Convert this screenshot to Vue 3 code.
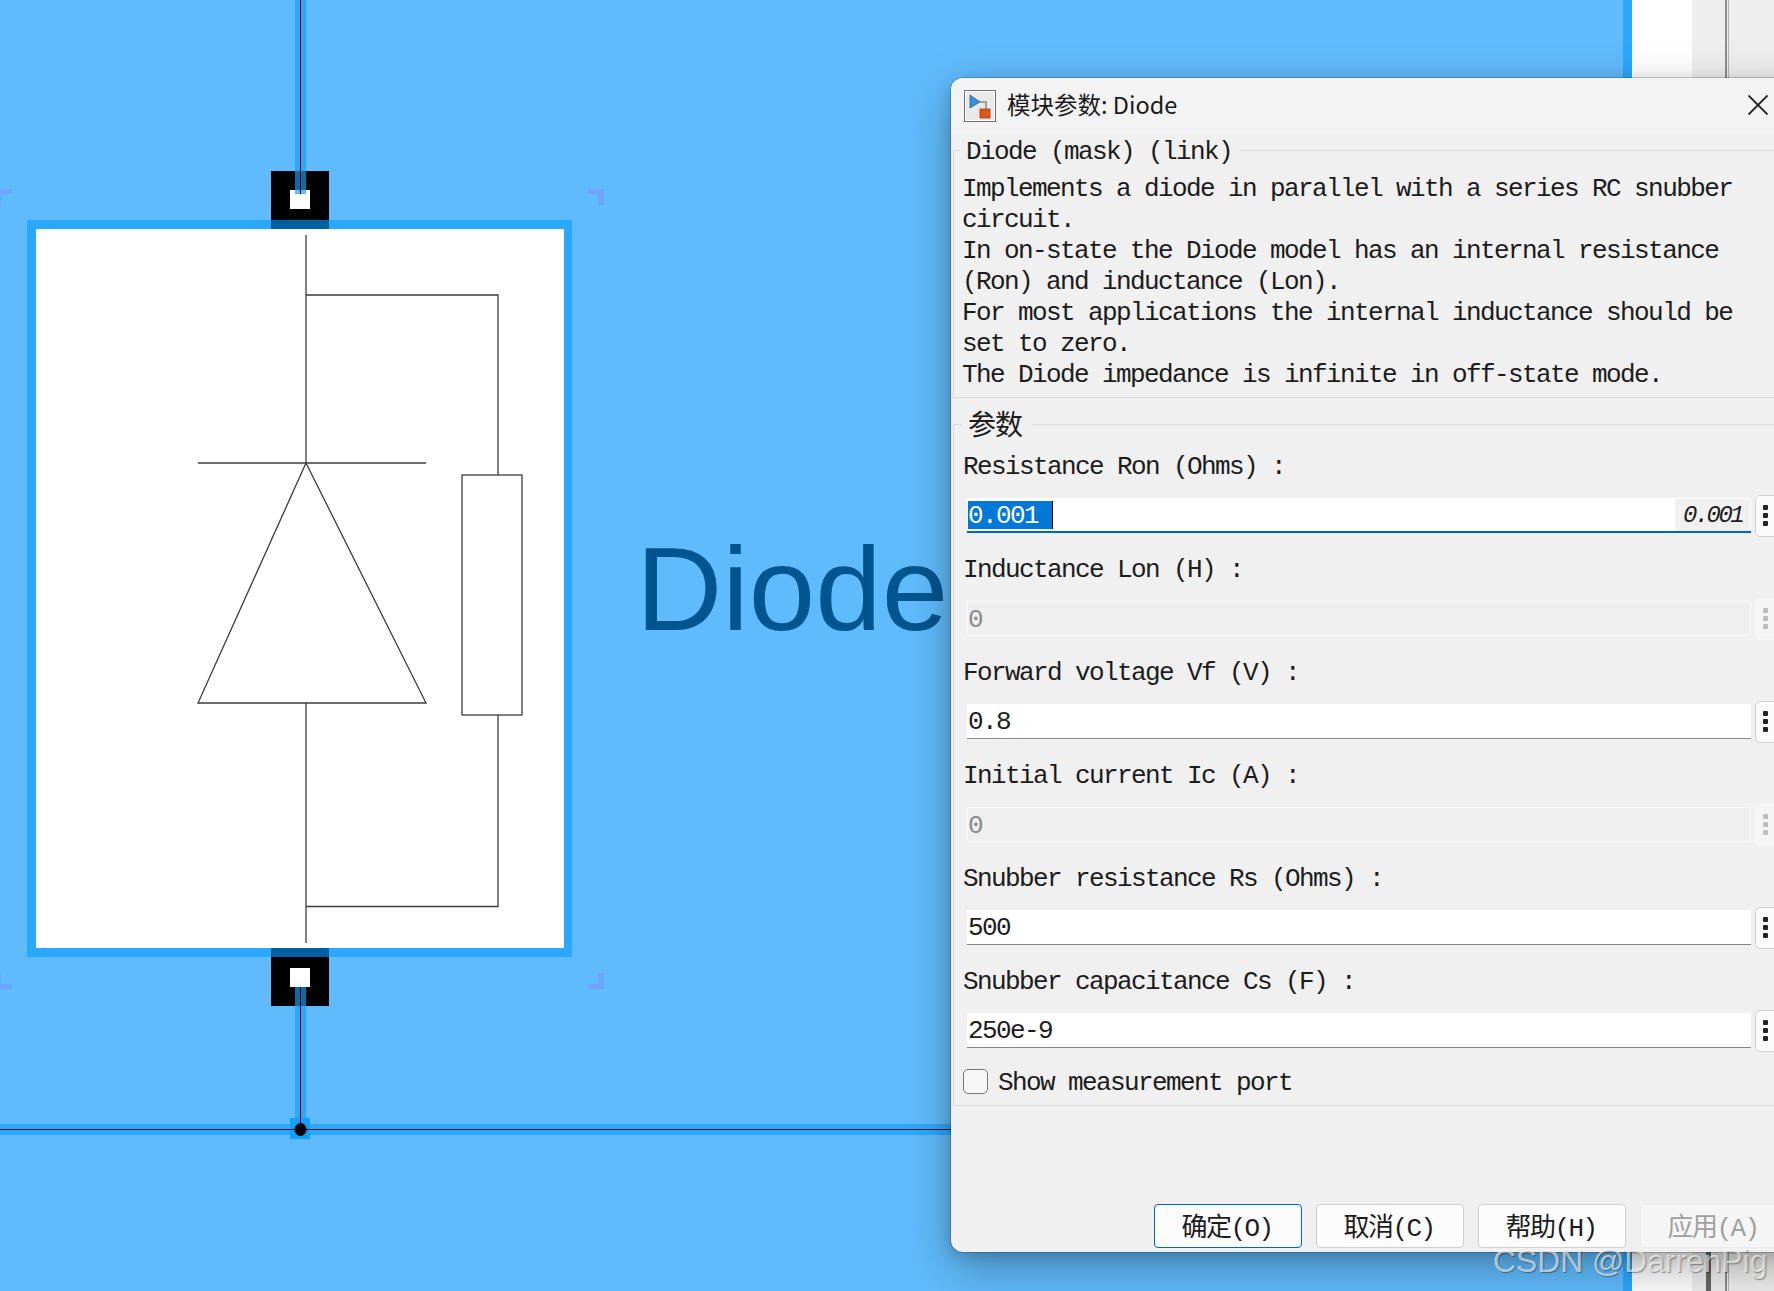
<script setup>
const descLines = [
  'Implements a diode in parallel with a series RC snubber',
  'circuit.',
  'In on-state the Diode model has an internal resistance',
  '(Ron) and inductance (Lon).',
  'For most applications the internal inductance should be',
  'set to zero.',
  'The Diode impedance is infinite in off-state mode.'
]
const fields = [
  { label: 'Resistance Ron (Ohms) :', value: '0.001', state: 'focus' },
  { label: 'Inductance Lon (H) :', value: '0', state: 'off' },
  { label: 'Forward voltage Vf (V) :', value: '0.8', state: 'on' },
  { label: 'Initial current Ic (A) :', value: '0', state: 'off' },
  { label: 'Snubber resistance Rs (Ohms) :', value: '500', state: 'on' },
  { label: 'Snubber capacitance Cs (F) :', value: '250e-9', state: 'on' }
]
const buttons = [
  { text: '确定(O)', kind: 'primary' },
  { text: '取消(C)', kind: '' },
  { text: '帮助(H)', kind: '' },
  { text: '应用(A)', kind: 'disabled' }
]
</script>

<template>
  <div class="screen">
    <svg class="diagram" width="1774" height="1291" viewBox="0 0 1774 1291">
      <rect x="1623" y="0" width="9" height="1291" fill="#28a8ff" />
      <rect x="1632" y="0" width="60" height="1291" fill="#ffffff" />
      <rect x="1692" y="0" width="82" height="1291" fill="#eeeeee" />
      <rect x="1725" y="0" width="2" height="1291" fill="#8c8c92" />
      <rect x="1728" y="0" width="1" height="1291" fill="#b5b5b8" />
      <rect x="1706" y="1240" width="5" height="51" fill="#666" />

      <g fill="#6ea4fb">
        <rect x="0" y="189" width="12" height="5" /><rect x="0" y="189" width="1" height="16" />
        <rect x="588" y="189" width="16" height="5" /><rect x="598" y="189" width="6" height="16" />
        <rect x="0" y="984" width="12" height="5" /><rect x="0" y="973" width="1" height="16" />
        <rect x="588" y="984" width="16" height="5" /><rect x="598" y="973" width="6" height="16" />
      </g>

      <rect x="27" y="220" width="545" height="737" fill="#2aa8ff" />
      <rect x="36" y="229" width="528" height="719" fill="#ffffff" />
      <rect x="271" y="171" width="58" height="49" fill="#000" />
      <rect x="271" y="220" width="58" height="9" fill="#0060a0" />
      <rect x="271" y="957" width="58" height="49" fill="#000" />
      <rect x="271" y="948" width="58" height="9" fill="#0060a0" />
      <rect x="290" y="190" width="20" height="19" fill="#fff" />
      <rect x="290" y="968" width="20" height="19" fill="#fff" />

      <rect x="295" y="0" width="11" height="171" fill="#2aa8ff" />
      <rect x="295" y="171" width="11" height="19" fill="#0f6ba8" />
      <rect x="295" y="190" width="11" height="4" fill="#63bdfd" />
      <rect x="295" y="987" width="11" height="19" fill="#0f6ba8" />
      <rect x="295" y="1006" width="11" height="118" fill="#2aa8ff" />
      <rect x="0" y="1124" width="960" height="11" fill="#2aa8ff" />
      <rect x="290" y="1118" width="20" height="21" fill="#10a0ff" />
      <rect x="300" y="0" width="1" height="194" fill="#000" />
      <rect x="300" y="987" width="1" height="142" fill="#000" />
      <rect x="0" y="1129" width="960" height="1" fill="#000" />
      <ellipse cx="300.5" cy="1129.5" rx="6" ry="6.5" fill="#000" />

      <g fill="none" stroke="#3c3c3c" stroke-width="1.300">
        <path d="M306 235V463" />
        <path d="M306 295H498V475" />
        <rect x="462" y="475" width="60" height="240" />
        <path d="M198 463H426" />
        <path d="M306 463L198 703H426Z" />
        <path d="M306 703V943" />
        <path d="M498 715V906.500H306" />
      </g>
      <text x="636" y="630" class="diode-name">Diode</text>
    </svg>

    <section class="dialog">
      <header class="title-bar">
        <svg class="app-icon" width="32" height="32" viewBox="0 0 32 32">
          <rect x="0.500" y="0.500" width="31" height="31" fill="#e9e9e9" stroke="#6f6f6f" />
          <rect x="1.500" y="1.500" width="29" height="29" fill="none" stroke="#ffffff" />
          <path d="M15 12H22V19" fill="none" stroke="#8a8a8a" stroke-width="1.500" />
          <path d="M6 5L16 12L6 18Z" fill="#3a8fd0" stroke="#1f5f9f" stroke-width="0.800" />
          <rect x="16" y="19" width="10" height="9" fill="#e0571c" stroke="#a53c10" stroke-width="0.800" />
        </svg>
        <span class="title-text">模块参数: Diode</span>
        <svg class="close-icon" width="20" height="20" viewBox="0 0 20 20">
          <path d="M0.500 0.500L19.500 19.500M19.500 0.500L0.500 19.500" stroke="#1a1a1a" stroke-width="1.800" fill="none" />
        </svg>
      </header>

      <fieldset class="group desc-group">
        <legend class="legend legend-wide">Diode (mask) (link)</legend>
        <p v-for="line in descLines" :key="line" class="line">{{ line }}</p>
      </fieldset>

      <fieldset class="group param-group">
        <legend class="legend legend-cjk">参数</legend>
        <div v-for="f in fields" :key="f.label" class="field">
          <label class="line label">{{ f.label }}</label>
          <div class="input-row">
            <div class="input" :class="f.state">
              <span v-if="f.state === 'focus'" class="selected">{{ f.value }}&nbsp;</span>
              <span v-else>{{ f.value }}</span>
              <span v-if="f.state === 'focus'" class="hint">{{ f.value }}</span>
            </div>
            <div class="spin" :class="{ 'spin-off': f.state === 'off' }">
              <i></i><i></i><i></i>
            </div>
          </div>
        </div>
        <div class="check-row">
          <span class="checkbox"></span>
          <span class="line">Show measurement port</span>
        </div>
      </fieldset>

      <footer class="button-row">
        <div v-for="b in buttons" :key="b.text" class="btn" :class="b.kind">{{ b.text }}</div>
      </footer>
    </section>

    <div class="watermark">CSDN @DarrenPig</div>
  </div>
</template>

<style scoped>
.screen {
  position: relative;
  width: 1774px;
  height: 1291px;
  overflow: hidden;
  background: #60bbfc;
}
.diagram {
  position: absolute;
  left: 0;
  top: 0;
}
.diode-name {
  font-family: "Liberation Sans", sans-serif;
  font-size: 119.500px;
  fill: #005590;
}
.dialog {
  position: absolute;
  left: 951px;
  top: 78px;
  width: 860px;
  height: 1174px;
  display: flex;
  flex-direction: column;
  background: #f0f0f0;
  border-radius: 12px 0 0 12px;
  box-shadow: 0 0 0 1px rgba(0, 0, 0, 0.18), 0 16px 48px rgba(0, 0, 0, 0.3), 0 4px 16px rgba(0, 0, 0, 0.14);
  font-family: "Liberation Mono", "Noto Sans CJK SC", monospace;
  font-size: 26px;
  letter-spacing: -1.6px;
  color: #1c1c1c;
}
.title-bar {
  flex: 0 0 56px;
  display: flex;
  align-items: center;
  padding-left: 13px;
  background: #f3f3f3;
  border-radius: 12px 0 0 0;
}
.app-icon {
  flex: none;
}
.title-text {
  margin-left: 11px;
  padding-bottom: 4px;
  font-family: "Noto Sans CJK SC", "Noto Sans", sans-serif;
  font-size: 23.500px;
  letter-spacing: 0;
  color: #1a1a1a;
}
.close-icon {
  position: absolute;
  left: 797px;
  top: 17px;
}
.group {
  min-width: 0;
  margin: 0 0 0 2px;
  padding: 0 0 0 9px;
  border: none;
  border-top: 1px solid #dcdcdc;
  border-left: 1px solid #dcdcdc;
  border-bottom: 1px solid #dcdcdc;
}
.legend {
  height: 32px;
  line-height: 36px;
  margin-left: -2px;
  padding: 0 8px 0 6px;
}
.legend-cjk {
  padding: 0 10px 0 7px;
  font-size: 28px;
  letter-spacing: -1px;
  line-height: 40px;
}
.desc-group {
  padding-left: 8px;
  padding-top: 8px;
  padding-bottom: 6px;
}
.param-group {
  margin-top: 10px;
  padding-top: 11px;
  padding-bottom: 11px;
}
.line {
  display: block;
  margin: 0;
  height: 31px;
  line-height: 31px;
  white-space: pre;
}
.label {
  line-height: 33px;
}
.field {
  height: 103px;
}
.input-row {
  display: flex;
  align-items: center;
  gap: 4px;
  height: 35px;
  margin-top: 16px;
  margin-left: 4px;
}
.input {
  position: relative;
  flex: 0 0 784px;
  height: 35px;
  box-sizing: border-box;
  display: flex;
  align-items: center;
  padding-left: 1px;
  padding-top: 3px;
  background: #ffffff;
  border-bottom: 1px solid #868686;
  line-height: 33px;
}
.input.focus {
  padding-top: 0;
  border-bottom: 2px solid #0067c0;
  background: #ffffff;
}
.input.off {
  background: #efefef;
  border: 1px solid #f8f8f8;
  padding-left: 0;
  color: #8a8a8a;
}
.selected {
  display: flex;
  align-items: center;
  box-sizing: border-box;
  height: 28px;
  padding-top: 3px;
  line-height: 25px;
  background: #0078d7;
  color: #ffffff;
  border-right: 1px solid #000;
}
.hint {
  position: absolute;
  right: 1px;
  top: 1px;
  width: 75px;
  height: 32px;
  box-sizing: border-box;
  padding-left: 8px;
  background: #f0f0f0;
  font-style: italic;
  font-size: 24px;
  letter-spacing: -2.600px;
  line-height: 34px;
}
.spin {
  flex: 0 0 30px;
  height: 42px;
  box-sizing: border-box;
  display: flex;
  flex-direction: column;
  justify-content: center;
  gap: 3px;
  padding-left: 7px;
  background: #fbfbfb;
  border: 1px solid #d0d0d0;
  border-radius: 5px;
}
.spin i {
  display: block;
  width: 5px;
  height: 5px;
  background: #222;
  border-radius: 1px;
}
.spin-off {
  background: #f5f5f5;
  border-color: #f8f8f8;
}
.spin-off i {
  background: #bdbdbd;
}
.check-row {
  display: flex;
  align-items: center;
  gap: 10px;
  height: 26px;
  margin-top: -1px;
}
.check-row .line {
  line-height: 35px;
}
.checkbox {
  flex: none;
  width: 25px;
  height: 25px;
  box-sizing: border-box;
  background: #f6f6f6;
  border: 1.500px solid #777;
  border-radius: 5px;
}
.button-row {
  display: flex;
  gap: 14px;
  margin-top: auto;
  margin-bottom: 4px;
  margin-left: 203px;
}
.btn {
  flex: 0 0 148px;
  height: 44px;
  box-sizing: border-box;
  display: flex;
  align-items: center;
  justify-content: center;
  padding-bottom: 2px;
  padding-right: 2px;
  background: #fcfcfc;
  border: 1px solid #cfcfcf;
  border-radius: 4px;
}
.btn.primary {
  border: 1.500px solid #0067c0;
}
.btn.disabled {
  background: #f5f5f5;
  border-color: #ececec;
  color: #a0a0a0;
}
.watermark {
  position: absolute;
  left: 1493px;
  top: 1243px;
  font-family: "Liberation Sans", sans-serif;
  font-size: 31.800px;
  line-height: 36px;
  white-space: nowrap;
  color: rgba(255, 255, 255, 0.62);
  text-shadow: 1px 1px 1px rgba(0, 0, 0, 0.35);
}
</style>
